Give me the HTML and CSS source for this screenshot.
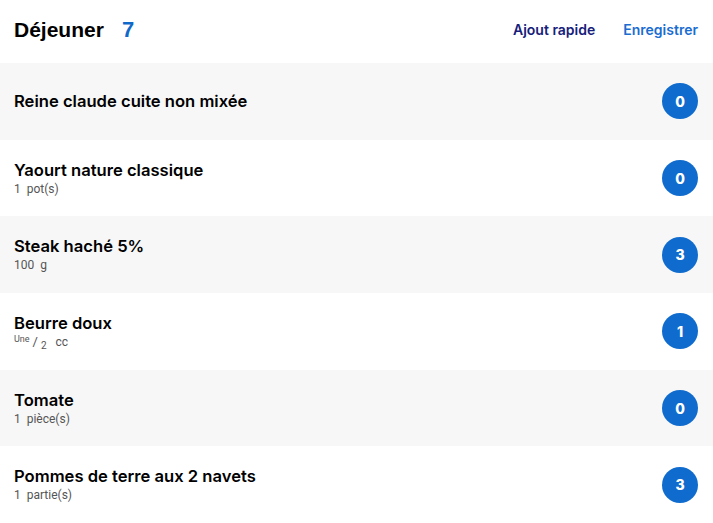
FILE: index.html
```html
<!DOCTYPE html>
<html lang="fr">
<head>
<meta charset="utf-8">
<link rel="stylesheet" href="styles.css">
</head>
<body>
<div class="page">
  <header class="head">
    <div class="title"><span class="meal">Déjeuner</span><span class="count">7</span></div>
    <nav class="actions">
      <a class="quick">Ajout rapide</a>
      <a class="save">Enregistrer</a>
    </nav>
  </header>
  <ul class="list">
    <li class="row alt"><div class="info"><div class="name">Reine claude cuite non mixée</div></div><span class="badge">0</span></li>
    <li class="row"><div class="info"><div class="name">Yaourt nature classique</div><div class="qty">1&nbsp; pot(s)</div></div><span class="badge">0</span></li>
    <li class="row alt"><div class="info"><div class="name">Steak haché 5%</div><div class="qty">100&nbsp; g</div></div><span class="badge">3</span></li>
    <li class="row"><div class="info"><div class="name">Beurre doux</div><div class="qty"><sup>Une</sup> <span class="slash">/</span> <sub>2</sub>&nbsp;&nbsp; cc</div></div><span class="badge">1</span></li>
    <li class="row alt"><div class="info"><div class="name">Tomate</div><div class="qty">1&nbsp; pièce(s)</div></div><span class="badge">0</span></li>
    <li class="row"><div class="info"><div class="name">Pommes de terre aux 2 navets</div><div class="qty">1&nbsp; partie(s)</div></div><span class="badge">3</span></li>
  </ul>
</div>
</body>
</html>
```
FILE: styles.css
```css
* { box-sizing: border-box; }
html, body { margin: 0; padding: 0; background: #fff; }
body { font-family: "Inter", "Liberation Sans", sans-serif; color: #111; }
.page { width: 713px; }
.head {
  height: 63px;
  display: flex;
  align-items: center;
  justify-content: space-between;
  padding: 0 15px 4px 14px;
}
.title { display: flex; align-items: baseline; gap: 18px; }
.meal { font-family: "Liberation Sans", sans-serif; font-weight: 700; font-size: 21px; color: #000; }
.count { font-family: "Liberation Sans", sans-serif; font-weight: 700; font-size: 22px; color: #1068c9; }
.actions { display: flex; gap: 28px; font-family: "Inter", sans-serif; font-weight: 600; font-size: 14px; }
.quick { color: #16207a; }
.save { color: #1a6dd1; }
.list { list-style: none; margin: 0; padding: 0; }
.row {
  height: 76.7px;
  display: flex;
  align-items: center;
  justify-content: space-between;
  padding: 0 15px 0 14px;
}
.row.alt { background: #f7f7f7; }
.info { display: flex; flex-direction: column; }
.name { font-family: "Inter", sans-serif; font-weight: 600; font-size: 16.6px; color: #000; line-height: 20px; }
.qty { font-family: "Roboto", sans-serif; font-size: 12px; color: #555; line-height: 16px; height: 16px; margin-top: 1px; }
.qty sup { font-size: 9px; vertical-align: 4px; line-height: 0; }
.qty .slash { font-size: 13px; line-height: 0; }
.qty sub { font-size: 10px; vertical-align: -3px; line-height: 0; }
.badge {
  width: 36px; height: 36px;
  border-radius: 50%;
  background: #0f6bcd;
  color: #fff;
  font-family: "Inter", sans-serif;
  font-weight: 800;
  font-size: 14px;
  display: flex; align-items: center; justify-content: center;
}
```
